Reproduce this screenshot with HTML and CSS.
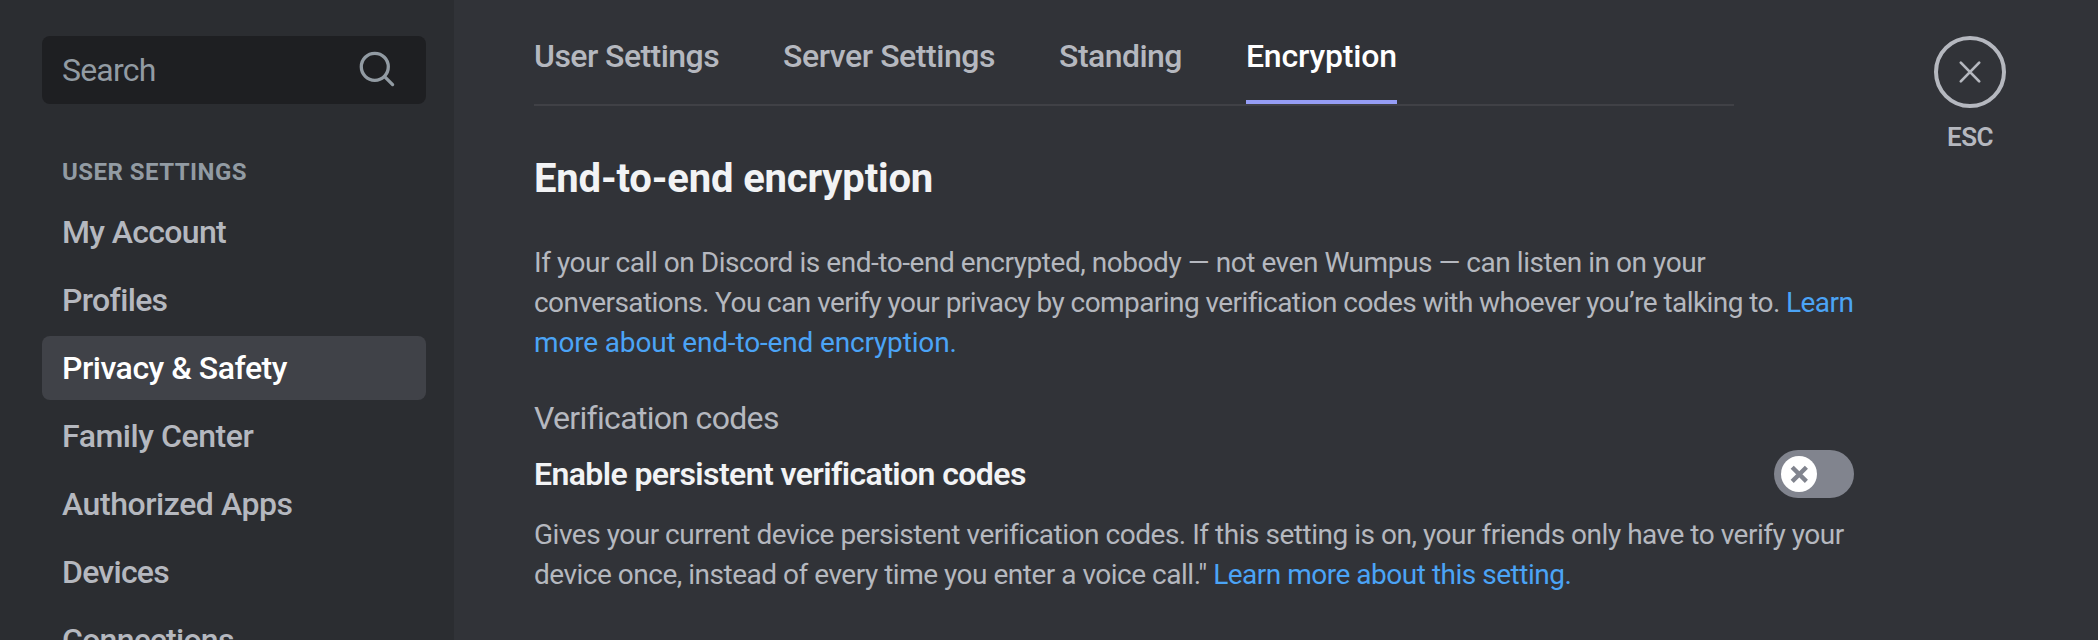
FILE: index.html
```html
<!DOCTYPE html>
<html lang="en">
<head>
<meta charset="utf-8">
<title>Privacy &amp; Safety</title>
<link rel="stylesheet" href="styles.css">
</head>
<body>
<div class="app">
  <aside class="sidebar">
    <div class="search">
      <span class="search-text">Search</span>
      <svg class="search-icon" width="40" height="40" viewBox="0 0 40 40" fill="none" stroke="currentColor" stroke-width="3.3" stroke-linecap="round"><circle cx="17.8" cy="16.8" r="13.5"/><path d="M27.6 26.6 35.6 34.6"/></svg>
    </div>
    <div class="section-title">USER SETTINGS</div>
    <nav class="nav">
      <a class="nav-item">My Account</a>
      <a class="nav-item">Profiles</a>
      <a class="nav-item nav-item-active">Privacy &amp; Safety</a>
      <a class="nav-item track-wide">Family Center</a>
      <a class="nav-item track-wide">Authorized Apps</a>
      <a class="nav-item track-tight">Devices</a>
      <a class="nav-item track-tight">Connections</a>
    </nav>
  </aside>
  <main class="main">
    <div class="content">
      <div class="tabs">
        <a class="tab">User Settings</a>
        <a class="tab track-server">Server Settings</a>
        <a class="tab">Standing</a>
        <a class="tab tab-active">Encryption</a>
      </div>
      <h1 class="title">End-to-end encryption</h1>
      <p class="text intro">
        <span class="line line-1">If your call on Discord is end-to-end encrypted, nobody — not even Wumpus — can listen in on your</span>
        <span class="line line-2">conversations. You can verify your privacy by comparing verification codes with whoever you’re talking to. <a class="link">Learn</a></span>
        <span class="line line-3"><a class="link">more about end-to-end encryption.</a></span>
      </p>
      <h2 class="subtitle">Verification codes</h2>
      <div class="setting">
        <span class="setting-name">Enable persistent verification codes</span>
        <span class="toggle">
          <span class="knob"><svg width="36" height="36" viewBox="0 0 36 36" stroke="currentColor" stroke-width="4.4"><path d="M11.2 11.2 25.4 25.4M25.4 11.2 11.2 25.4"/></svg></span>
        </span>
      </div>
      <p class="text note">
        <span class="line line-4">Gives your current device persistent verification codes. If this setting is on, your friends only have to verify your</span>
        <span class="line line-5">device once, instead of every time you enter a voice call." <a class="link">Learn more about this setting.</a></span>
      </p>
    </div>
    <div class="close">
      <div class="close-ring"><svg width="36" height="36" viewBox="0 0 36 36" stroke="currentColor" stroke-width="2.7" stroke-linecap="round"><path d="M8.8 8.6 27.2 27.4M27.2 8.6 8.8 27.4"/></svg></div>
      <div class="close-label">ESC</div>
    </div>
  </main>
</div>
</body>
</html>
```
FILE: styles.css
```css
* { box-sizing: border-box; }
body {
  margin: 0;
  background: #313338;
  font-family: Roboto, "Noto Sans", sans-serif;
  color: #b5b8bf;
}
.app { display: flex; height: 640px; overflow: hidden; }

.sidebar {
  flex: none;
  width: 454px;
  height: 640px;
  padding: 36px 28px 0 42px;
  background: #2b2d31;
  overflow: hidden;
}
.search {
  display: flex;
  align-items: center;
  justify-content: space-between;
  height: 68px;
  padding: 0 29px 0 20px;
  border-radius: 8px;
  background: #1e1f22;
  color: #929ba3;
}
.search-text { font-size: 32px; letter-spacing: -0.8px; }
.search-icon { display: block; }
.section-title {
  margin-top: 56px;
  padding-left: 20px;
  font-size: 24px;
  font-weight: 700;
  line-height: 24px;
  letter-spacing: 0.46px;
  color: #929ba3;
}
.nav { display: flex; flex-direction: column; gap: 4px; margin-top: 16px; }
.nav-item {
  height: 64px;
  padding-left: 20px;
  border-radius: 8px;
  font-size: 32px;
  font-weight: 500;
  line-height: 64px;
  letter-spacing: -0.66px;
  white-space: nowrap;
}
.nav-item-active { background: #404248; color: #fff; letter-spacing: -0.48px; }
.track-wide { letter-spacing: -0.45px; }
.track-tight { letter-spacing: -0.74px; }

.main { display: flex; align-items: flex-start; padding-left: 80px; }
.content { flex: none; width: 1320px; }
.tabs {
  display: flex;
  gap: 64px;
  width: 1200px;
  height: 106px;
  border-bottom: 2px solid #404146;
}
.tab {
  height: 104px;
  padding-top: 36px;
  font-size: 32px;
  font-weight: 500;
  line-height: 40px;
  letter-spacing: -0.55px;
  white-space: nowrap;
}
.track-server { letter-spacing: -0.44px; }
.tab-active { border-bottom: 4px solid #959df5; color: #fff; letter-spacing: -0.16px; }
.title {
  margin: 55px 0 0;
  font-size: 40px;
  font-weight: 700;
  line-height: 36px;
  letter-spacing: -0.17px;
  color: #f2f3f5;
}
.text { margin: 0; font-size: 28px; line-height: 40px; }
.line { display: block; white-space: nowrap; }
.line-1 { letter-spacing: -0.45px; }
.line-2 { letter-spacing: -0.57px; }
.line-3 { letter-spacing: -0.16px; }
.line-4 { letter-spacing: -0.48px; }
.line-5 { letter-spacing: -0.49px; }
.link { color: #4ba4f6; }
.intro { margin-top: 46px; }
.subtitle {
  margin: 35px 0 0;
  font-size: 32px;
  font-weight: 400;
  line-height: 40px;
  letter-spacing: -0.68px;
}
.setting {
  display: flex;
  align-items: center;
  justify-content: space-between;
  height: 48px;
  margin-top: 12px;
}
.setting-name { font-size: 32px; font-weight: 600; letter-spacing: -0.59px; color: #f2f3f5; }
.toggle {
  display: flex;
  align-items: center;
  width: 80px;
  height: 48px;
  padding-left: 7px;
  border-radius: 24px;
  background: #81848e;
}
.knob { width: 36px; height: 36px; border-radius: 50%; background: #fff; color: #81848e; }
.knob svg { display: block; }
.note { margin-top: 17px; }

.close {
  display: flex;
  flex-direction: column;
  align-items: center;
  width: 72px;
  margin: 36px 0 0 80px;
}
.close-ring {
  display: grid;
  place-items: center;
  width: 72px;
  height: 72px;
  border: 4px solid #b5b8bf;
  border-radius: 50%;
}
.close-label {
  margin-top: 15px;
  font-size: 26px;
  font-weight: 600;
  line-height: 28px;
  letter-spacing: -0.5px;
}
```
